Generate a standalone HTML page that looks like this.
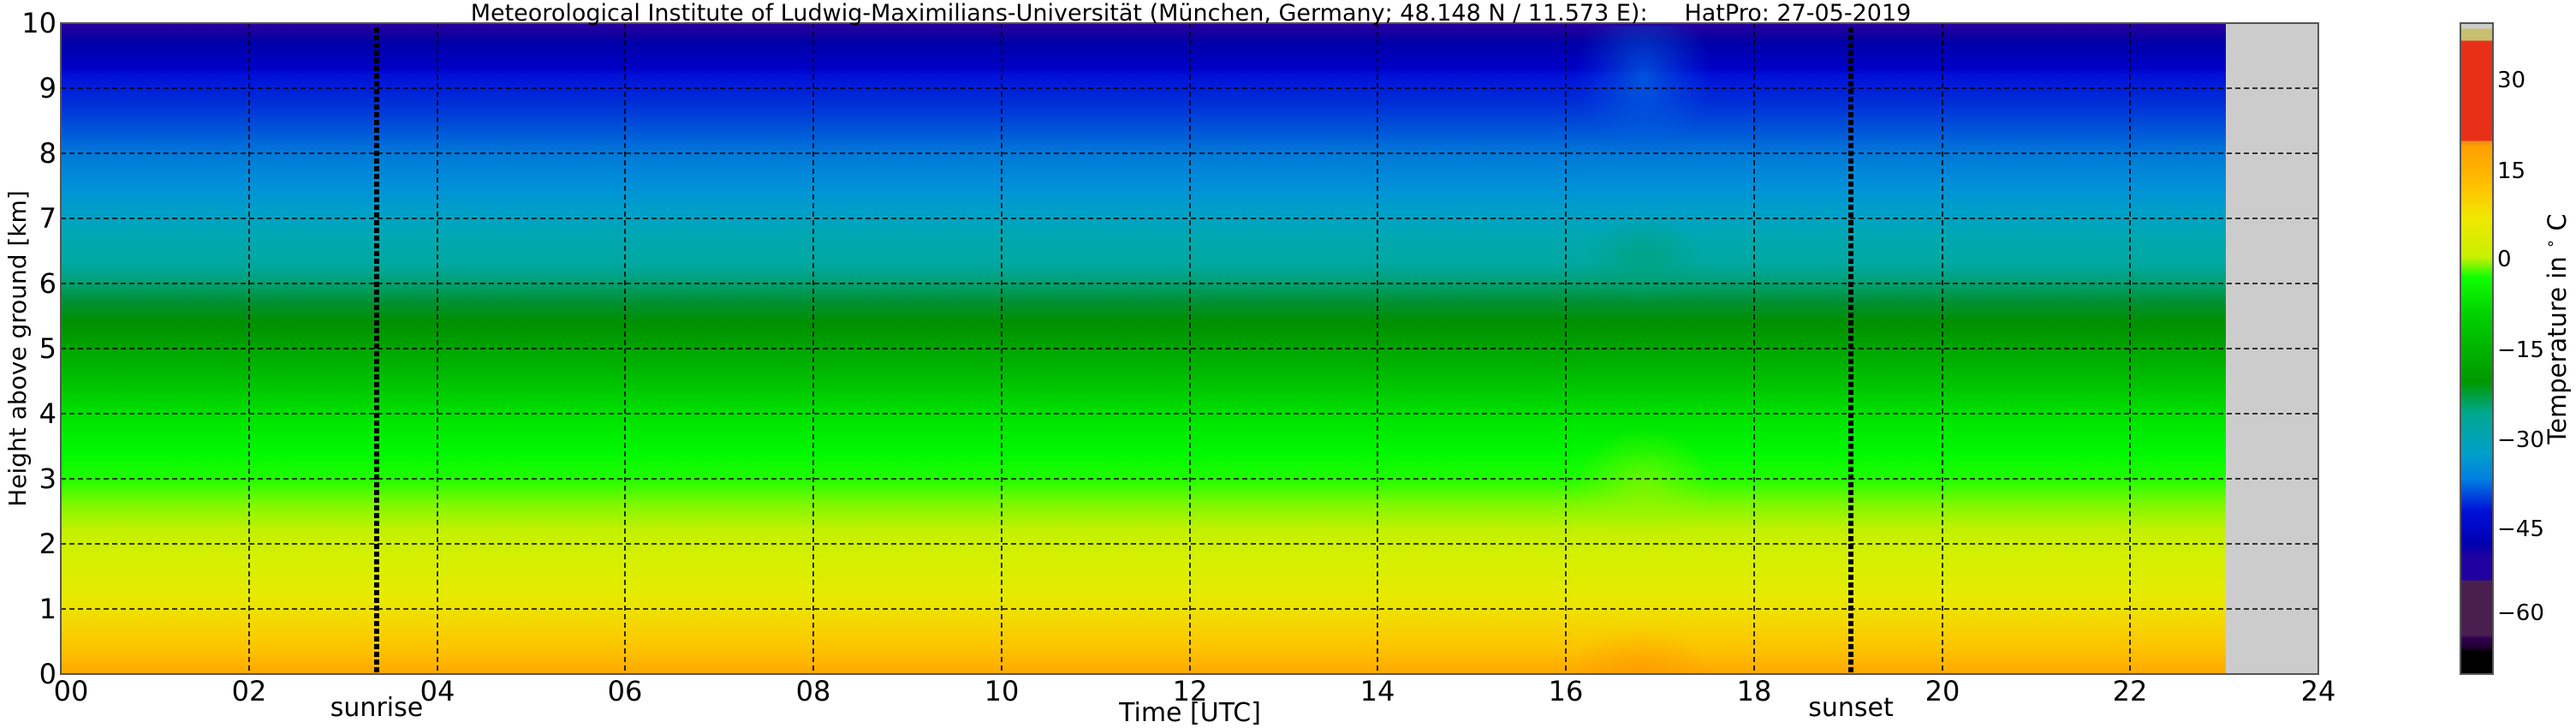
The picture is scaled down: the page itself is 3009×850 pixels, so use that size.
<!DOCTYPE html>
<html><head><meta charset="utf-8"><style>
html,body{margin:0;padding:0;background:#fff;width:3009px;height:850px;overflow:hidden}
text{font-family:"DejaVu Sans","Liberation Sans",sans-serif;fill:#000}
</style></head><body>
<svg width="3009" height="850" viewBox="0 0 3009 850" xmlns="http://www.w3.org/2000/svg">
<defs>
<linearGradient id="prof" x1="0" y1="27" x2="0" y2="787" gradientUnits="userSpaceOnUse">
<stop offset="0" stop-color="#2a00a0"/>
<stop offset="0.02" stop-color="#1000a0"/>
<stop offset="0.03" stop-color="#0000a8"/>
<stop offset="0.07" stop-color="#0000c8"/>
<stop offset="0.08" stop-color="#0010d8"/>
<stop offset="0.125" stop-color="#0030d8"/>
<stop offset="0.16" stop-color="#0050d8"/>
<stop offset="0.2" stop-color="#0078d8"/>
<stop offset="0.25" stop-color="#0090d8"/>
<stop offset="0.29" stop-color="#00a0c8"/>
<stop offset="0.33" stop-color="#00a8b0"/>
<stop offset="0.37" stop-color="#00a8a0"/>
<stop offset="0.40" stop-color="#00a070"/>
<stop offset="0.43" stop-color="#009030"/>
<stop offset="0.46" stop-color="#009000"/>
<stop offset="0.5" stop-color="#00a400"/>
<stop offset="0.55" stop-color="#00c000"/>
<stop offset="0.6" stop-color="#00e000"/>
<stop offset="0.66" stop-color="#00f800"/>
<stop offset="0.7" stop-color="#20ff00"/>
<stop offset="0.74" stop-color="#80f800"/>
<stop offset="0.78" stop-color="#c4f000"/>
<stop offset="0.82" stop-color="#d4f000"/>
<stop offset="0.88" stop-color="#e6ea00"/>
<stop offset="0.92" stop-color="#f4d800"/>
<stop offset="0.96" stop-color="#fcc400"/>
<stop offset="1" stop-color="#ffa800"/>
</linearGradient>
<linearGradient id="cb" x1="0" y1="27" x2="0" y2="787" gradientUnits="userSpaceOnUse">
<stop offset="0" stop-color="#cccccc"/>
<stop offset="0.008" stop-color="#cccccc"/>
<stop offset="0.009" stop-color="#c8c070"/>
<stop offset="0.026" stop-color="#c8c070"/>
<stop offset="0.028" stop-color="#e83018"/>
<stop offset="0.18" stop-color="#e83018"/>
<stop offset="0.182" stop-color="#e89018"/>
<stop offset="0.19" stop-color="#ffa000"/>
<stop offset="0.25" stop-color="#ffc000"/>
<stop offset="0.3" stop-color="#f0e800"/>
<stop offset="0.36" stop-color="#c8f000"/>
<stop offset="0.39" stop-color="#10ff00"/>
<stop offset="0.45" stop-color="#00d000"/>
<stop offset="0.55" stop-color="#009800"/>
<stop offset="0.6" stop-color="#00a890"/>
<stop offset="0.66" stop-color="#00a0c8"/>
<stop offset="0.7" stop-color="#0080e0"/>
<stop offset="0.75" stop-color="#0010d8"/>
<stop offset="0.8" stop-color="#0000b0"/>
<stop offset="0.82" stop-color="#2000a0"/>
<stop offset="0.855" stop-color="#2000a0"/>
<stop offset="0.857" stop-color="#4a1f50"/>
<stop offset="0.94" stop-color="#4a1f50"/>
<stop offset="0.945" stop-color="#300050"/>
<stop offset="0.96" stop-color="#200030"/>
<stop offset="0.965" stop-color="#000000"/>
<stop offset="1" stop-color="#000000"/>
</linearGradient>
<radialGradient id="blobB" cx="0.5" cy="1" r="0.5"><stop offset="0" stop-color="#ff9800" stop-opacity="0.7"/><stop offset="1" stop-color="#ff9800" stop-opacity="0"/></radialGradient>
<radialGradient id="blobT" cx="0.5" cy="0.3" r="0.5"><stop offset="0" stop-color="#0080e0" stop-opacity="0.6"/><stop offset="1" stop-color="#0060e0" stop-opacity="0"/></radialGradient>
<radialGradient id="blobM" cx="0.5" cy="0.5" r="0.5"><stop offset="0" stop-color="#b0f000" stop-opacity="0.5"/><stop offset="1" stop-color="#b0f000" stop-opacity="0"/></radialGradient>
<radialGradient id="blobG" cx="0.5" cy="0.5" r="0.5"><stop offset="0" stop-color="#00a070" stop-opacity="0.6"/><stop offset="1" stop-color="#00a070" stop-opacity="0"/></radialGradient>
</defs>
<rect x="71" y="27" width="2529" height="760" fill="url(#prof)"/>
<rect x="1840" y="30" width="160" height="200" fill="url(#blobT)"/>
<rect x="1850" y="250" width="140" height="100" fill="url(#blobG)"/>
<rect x="1840" y="500" width="160" height="130" fill="url(#blobM)"/>
<rect x="1830" y="680" width="170" height="107" fill="url(#blobB)"/>
<rect x="2600" y="27" width="108" height="760" fill="#cccccc"/>
<g stroke="#000" stroke-width="1.6" stroke-dasharray="6,4" fill="none">
<line x1="71" y1="103" x2="2708" y2="103"/><line x1="71" y1="179" x2="2708" y2="179"/>
<line x1="71" y1="255" x2="2708" y2="255"/><line x1="71" y1="331" x2="2708" y2="331"/>
<line x1="71" y1="407" x2="2708" y2="407"/><line x1="71" y1="483" x2="2708" y2="483"/>
<line x1="71" y1="559" x2="2708" y2="559"/><line x1="71" y1="635" x2="2708" y2="635"/>
<line x1="71" y1="711" x2="2708" y2="711"/>
<line x1="291" y1="27" x2="291" y2="787"/><line x1="511" y1="27" x2="511" y2="787"/>
<line x1="730" y1="27" x2="730" y2="787"/><line x1="950" y1="27" x2="950" y2="787"/>
<line x1="1170" y1="27" x2="1170" y2="787"/><line x1="1390" y1="27" x2="1390" y2="787"/>
<line x1="1609" y1="27" x2="1609" y2="787"/><line x1="1829" y1="27" x2="1829" y2="787"/>
<line x1="2049" y1="27" x2="2049" y2="787"/><line x1="2269" y1="27" x2="2269" y2="787"/>
<line x1="2488" y1="27" x2="2488" y2="787"/>
</g>
<g stroke="#000" stroke-width="6" stroke-dasharray="6,3">
<line x1="440" y1="32" x2="440" y2="787"/><line x1="2162" y1="32" x2="2162" y2="787"/>
</g>
<rect x="71" y="27" width="2637" height="760" fill="none" stroke="#555" stroke-width="2"/>
<text x="1391" y="24" font-size="27" text-anchor="middle" xml:space="preserve">Meteorological Institute of Ludwig-Maximilians-Universität (München, Germany; 48.148 N / 11.573 E):     HatPro: 27-05-2019</text>
<g font-size="32" text-anchor="end">
<text x="66" y="38">10</text><text x="66" y="114">9</text><text x="66" y="190">8</text>
<text x="66" y="266">7</text><text x="66" y="342">6</text><text x="66" y="418">5</text>
<text x="66" y="494">4</text><text x="66" y="570">3</text><text x="66" y="646">2</text>
<text x="66" y="722">1</text><text x="66" y="798">0</text>
</g>
<g font-size="32" text-anchor="middle">
<text x="83" y="818">00</text><text x="291" y="818">02</text><text x="511" y="818">04</text>
<text x="730" y="818">06</text><text x="950" y="818">08</text><text x="1170" y="818">10</text>
<text x="1390" y="818">12</text><text x="1609" y="818">14</text><text x="1829" y="818">16</text>
<text x="2049" y="818">18</text><text x="2269" y="818">20</text><text x="2488" y="818">22</text>
<text x="2708" y="818">24</text>
</g>
<g font-size="30" text-anchor="middle">
<text x="440" y="836">sunrise</text><text x="2162" y="836">sunset</text>
<text x="1390" y="842">Time [UTC]</text>
</g>
<text transform="translate(30,407) rotate(-90)" font-size="28" text-anchor="middle">Height above ground [km]</text>
<rect x="2874" y="27" width="38" height="760" fill="url(#cb)" stroke="#555" stroke-width="2"/>
<g font-size="26">
<text x="2917" y="102">30</text><text x="2917" y="208">15</text><text x="2917" y="311">0</text>
<text x="2917" y="417">−15</text><text x="2917" y="522">−30</text><text x="2917" y="626">−45</text>
<text x="2917" y="724">−60</text>
</g>
<text transform="translate(2997,384) rotate(-90)" font-size="29" text-anchor="middle">Temperature in <tspan font-size="18" dy="-12">∘</tspan><tspan dy="12"> C</tspan></text>
</svg>
</body></html>
